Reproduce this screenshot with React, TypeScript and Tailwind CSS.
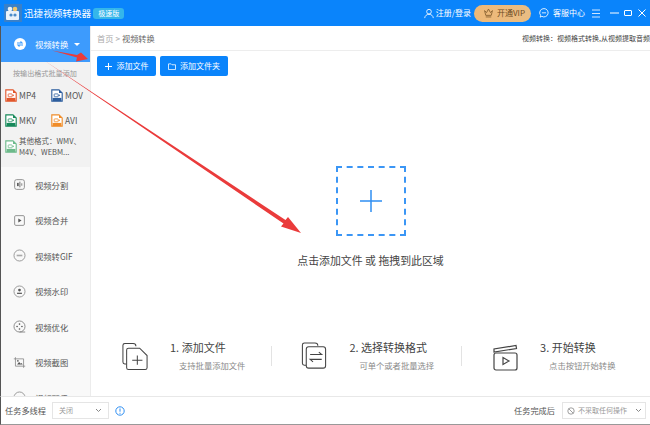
import React from "react";

const font = { fontFamily: '"Noto Sans CJK SC", "Liberation Sans", sans-serif' };

function Doc({ color, label }: { color: string; label: string }) {
  return (
    <svg width="12" height="13" viewBox="0 0 15 16" className="shrink-0">
      <title>{label}</title>
      <path d="M1 1h9l4 4v10H1z" fill="#fff" stroke={color} strokeWidth="1.4" />
      <path d="M10 1v4h4" fill={color} />
      <rect x="2" y="11" width="11" height="4" fill={color} />
      <rect x="4" y="6" width="5" height="3.6" rx=".6" fill="none" stroke={color} strokeWidth="1" />
      <path d="M9 7.8l2-1.2v2.4z" fill={color} />
    </svg>
  );
}

function Format({ color, label }: { color: string; label: string }) {
  return (
    <div className="flex w-[46px] shrink-0 items-center gap-[2px]">
      <Doc color={color} label={label} />
      <span className="text-[8.5px] text-[#555]">{label}</span>
    </div>
  );
}

const tools: [string, React.ReactNode][] = [
  ["视频分割", <g key="a"><rect x="2" y="2" width="12" height="12" rx="2.5" fill="none" stroke="#888" strokeWidth="1.1" /><rect x="5" y="6" width="2" height="4" fill="#555" /><rect x="8" y="4.5" width="1" height="7" fill="#555" /><rect x="10" y="6.5" width="1.5" height="3" fill="#999" /></g>],
  ["视频合并", <g key="b"><rect x="2" y="2" width="12" height="12" rx="1.5" fill="none" stroke="#888" strokeWidth="1.1" /><path d="M6.5 5.5l4 2.5-4 2.5z" fill="#555" /></g>],
  ["视频转GIF", <g key="c"><circle cx="8" cy="8" r="6.8" fill="none" stroke="#888" strokeWidth="1" /><rect x="4.5" y="7" width="7" height="2" fill="#aaa" /></g>],
  ["视频水印", <g key="d"><circle cx="8" cy="8" r="6.8" fill="none" stroke="#888" strokeWidth="1" /><circle cx="8" cy="6.2" r="1.7" fill="#555" /><path d="M5 11h6V9.5H5z" fill="#555" /></g>],
  ["视频优化", <g key="e"><circle cx="8" cy="8" r="6.8" fill="none" stroke="#777" strokeWidth="1" /><path d="M8 14.8h7" stroke="#777" /><circle cx="8" cy="5" r="1" fill="#555" /><circle cx="8" cy="11" r="1" fill="#555" /><circle cx="5" cy="8" r="1" fill="#555" /><circle cx="11" cy="8" r="1" fill="#555" /></g>],
  ["视频截图", <g key="f"><path d="M3 1.500v11h12M1 3.500h12v11" fill="none" stroke="#888" strokeWidth="1" /><path d="M5 10.500l2.500-3 2 2 1-1 1.500 2z" fill="#555" /><circle cx="6" cy="6" r="1" fill="#555" /></g>],
  ["视频配乐", <g key="g"><circle cx="8" cy="8" r="6.8" fill="none" stroke="#888" strokeWidth="1" /><circle cx="8" cy="8" r="2" fill="#777" /></g>],
];

function Step({ icon, title, sub, subIndent }: { icon: React.ReactNode; title: string; sub: string; subIndent: string }) {
  return (
    <div className="flex items-start gap-[22px]">
      {icon}
      <div className="flex flex-col items-start">
        <div className="whitespace-nowrap text-[11px] leading-[18px] text-[#444]">{title}</div>
        <div className={`mt-[2px] whitespace-nowrap text-[8.3px] leading-[14px] text-[#8a8a8a] ${subIndent}`}>{sub}</div>
      </div>
    </div>
  );
}

export default function App() {
  return (
    <div className="relative flex h-[425px] w-[650px] flex-col overflow-hidden bg-white" style={font}>
      <header className="flex h-[26px] shrink-0 items-center bg-[#0a84fb] text-white">
        <svg width="18" height="18" viewBox="0 0 18 18" className="ml-[4px]">
          <rect width="18" height="18" fill="#3a80c8" />
          <rect x="2" y="7" width="13" height="9" rx="1" fill="#e8f2fb" />
          <circle cx="6" cy="5" r="2.3" fill="#e8f2fb" />
          <circle cx="11" cy="5" r="2.3" fill="#f5c66a" />
          <circle cx="7" cy="11" r="1.6" fill="#4a8cc8" />
          <circle cx="11" cy="11" r="1.6" fill="#4a8cc8" />
        </svg>
        <span className="ml-[2px] text-[9.6px]">迅捷视频转换器</span>
        <span className="ml-[2px] flex h-[11px] w-[31px] items-center justify-center rounded-[3px] bg-[#35b6ea] text-[7px]">极速版</span>
        <div className="ml-auto flex items-center">
          <svg width="10" height="11" viewBox="0 0 12 12" fill="none" stroke="#fff" strokeWidth="1">
            <circle cx="6" cy="3.8" r="2.8" />
            <path d="M.8 11.500c.4-3 2.500-4.500 5.200-4.500s4.800 1.500 5.200 4.500" />
          </svg>
          <span className="ml-[2px] whitespace-nowrap text-[8px]">注册/登录</span>
          <div className="ml-[3px] flex h-[17px] w-[57px] items-center rounded-full bg-gradient-to-r from-[#eeb877] to-[#e9bd83] pl-[9px] text-[#6b4a22]">
            <svg width="11" height="10" viewBox="0 0 14 12" fill="none" stroke="#7a5526" strokeWidth="1">
              <path d="M2 3l2.500 2.500L7 1l2.500 4.500L12 3l-1.500 6h-7z" />
              <path d="M3.500 11h7" />
            </svg>
            <span className="ml-[3px] whitespace-nowrap text-[8px]">开通VIP</span>
          </div>
          <svg width="10" height="10" viewBox="0 0 12 12" fill="none" stroke="#fff" strokeWidth="1" className="ml-[8px]">
            <path d="M6 .7a5 5 0 1 1-2.600 9.300L1.500 11l.4-2.200A5 5 0 0 1 6 .7z" />
            <path d="M3.500 5.800h5" />
          </svg>
          <span className="ml-[4px] whitespace-nowrap text-[8px]">客服中心</span>
          <svg width="8" height="9" viewBox="0 0 8 9" stroke="#cfe5ff" strokeWidth="1" className="ml-[7px]">
            <path d="M0 1h8M0 4.500h8M0 8h8" />
          </svg>
          <svg width="9" height="10" viewBox="0 0 9 10" stroke="#fff" strokeWidth="1" fill="none" className="ml-[10px]">
            <path d="M0 5h9" />
          </svg>
          <svg width="8" height="10" viewBox="0 0 8 10" stroke="#fff" strokeWidth="1" fill="none" className="ml-[5px]">
            <rect x=".5" y="2.500" width="7" height="5" rx=".5" />
          </svg>
          <svg width="8" height="10" viewBox="0 0 8 10" stroke="#fff" strokeWidth="1" className="ml-[6px] mr-[4px]">
            <path d="M.5 1.500l7 7M7.500 1.500l-7 7" />
          </svg>
        </div>
      </header>

      <div className="flex min-h-0 flex-1">
        <aside className="flex w-[91px] shrink-0 flex-col overflow-hidden border-x border-l-[#555] border-r-[#ececec] bg-[#f9f9f9]">
          <div className="flex h-[36px] shrink-0 items-center bg-[#3d9bfd] pl-[13px] text-white">
            <span className="flex h-[12px] w-[12px] items-center justify-center rounded-full bg-white">
              <svg width="8" height="8" viewBox="0 0 8 8" fill="none" stroke="#3d9bfd" strokeWidth="1.100">
                <path d="M1 3h5L4.500 1.500M7 5H2l1.500 1.500" />
              </svg>
            </span>
            <span className="ml-[9px] whitespace-nowrap text-[8.3px]">视频转换</span>
            <span className="ml-[6px] h-0 w-0 border-x-[3px] border-t-[3px] border-x-transparent border-t-white" />
          </div>
          <div className="flex h-[105px] shrink-0 flex-col bg-[#f2f2f2]">
            <div className="mt-[5px] whitespace-nowrap pl-[12px] text-[7.1px] leading-[12px] text-[#999]">按输出格式批量添加</div>
            <div className="mt-[10px] flex pl-[4px]">
              <Format color="#e2572c" label="MP4" />
              <Format color="#2d5e9e" label="MOV" />
            </div>
            <div className="mt-[12px] flex pl-[4px]">
              <Format color="#16895a" label="MKV" />
              <Format color="#f08c28" label="AVI" />
            </div>
            <div className="mt-[8px] flex items-center gap-[2px] pl-[4px]">
              <Doc color="#6cba8a" label="其他格式" />
              <span className="whitespace-nowrap text-[7.5px] leading-[11px] text-[#555]">其他格式：WMV、<br />M4V、WEBM...</span>
            </div>
          </div>
          <div className="flex flex-col">
            {tools.map(([label, icon]) => (
              <div key={label} className="flex h-[35.5px] shrink-0 items-center pl-[12px]">
                <svg width="13" height="13" viewBox="0 0 16 16">{icon}</svg>
                <span className="ml-[9px] whitespace-nowrap text-[8.3px] text-[#555]">{label}</span>
              </div>
            ))}
          </div>
        </aside>

        <main className="flex min-w-0 flex-1 flex-col">
          <div className="flex h-[25px] shrink-0 items-center justify-between border-b border-b-[#ededed] pl-[6px]">
            <div className="flex items-center text-[8.2px]">
              <span className="text-[#aaa]">首页</span>
              <span className="mx-[2px] text-[#aaa]">&gt;</span>
              <span className="text-[#666]">视频转换</span>
            </div>
            <span className="whitespace-nowrap text-[7px] text-[#444]">视频转换：视频格式转换,从视频提取音频</span>
          </div>
          <div className="flex gap-[4px] pl-[6px] pt-[5px]">
            <button className="flex h-[20px] w-[59px] items-center justify-center rounded-[2px] bg-[#0a84fb] text-[8px] text-white">
              <svg width="7" height="7" viewBox="0 0 7 7" stroke="#fff" className="mr-[5px]"><path d="M3.500 0v7M0 3.500h7" /></svg>
              添加文件
            </button>
            <button className="flex h-[20px] w-[68px] items-center justify-center rounded-[2px] bg-[#0a84fb] text-[8px] text-white">
              <svg width="8" height="7" viewBox="0 0 9 8" fill="none" stroke="#fff" strokeWidth=".9" className="mr-[4px]"><path d="M.5 1h3l1 1h4v5.500h-8z" /></svg>
              添加文件夹
            </button>
          </div>

          <div className="flex flex-1 flex-col items-center">
            <div className="mt-[90px] flex h-[70px] w-[70px] items-center justify-center border-2 border-dashed border-[#3b96f5]">
              <svg width="22" height="22" viewBox="0 0 22 22" stroke="#2f8ff2" strokeWidth="1.500"><path d="M11 0v22M0 11h22" /></svg>
            </div>
            <div className="mt-[16px] whitespace-nowrap text-[10.9px] leading-[16px] text-[#444]">点击添加文件 或 拖拽到此区域</div>
          </div>

          <div className="flex h-[58px] shrink-0 items-start pl-[31px]">
            <Step
              title="1. 添加文件"
              sub="支持批量添加文件"
              subIndent="ml-[9px]"
              icon={
                <svg width="26" height="29" viewBox="0 0 28 30" fill="none" stroke="#444" strokeWidth="1.100" className="mt-[4px]">
                  <path d="M5 23H3a2 2 0 0 1-2-2V3a2 2 0 0 1 2-2h9a3 3 0 0 1 3 3" />
                  <path d="M5 8a2 2 0 0 1 2-2h12l8 8v13a2 2 0 0 1-2 2H7a2 2 0 0 1-2-2z" fill="#fff" />
                  <path d="M11 19h11M16.500 14v10" />
                </svg>
              }
            />
            <div className="ml-[26px] mt-[8px] h-[20px] w-px bg-[#e3e3e3]" />
            <div className="ml-[29px]">
              <Step
                title="2. 选择转换格式"
                sub="可单个或者批量选择"
                subIndent="ml-[10px]"
                icon={
                  <svg width="26" height="29" viewBox="0 0 26 30" fill="none" stroke="#444" strokeWidth="1.100" className="mt-[4px]">
                    <path d="M5 24H3a2 2 0 0 1-2-2V3a2 2 0 0 1 2-2h11a3 3 0 0 1 3 3" />
                    <rect x="5" y="5" width="20" height="22" rx="2.500" fill="#fff" />
                    <path d="M9 13h12l-3-2.500M21 18H9l3 2.500" />
                  </svg>
                }
              />
            </div>
            <div className="ml-[27px] mt-[8px] h-[20px] w-px bg-[#e3e3e3]" />
            <div className="ml-[31px]">
              <Step
                title="3. 开始转换"
                sub="点击按钮开始转换"
                subIndent="ml-[9px]"
                icon={
                  <svg width="25" height="28" viewBox="0 0 25 28" fill="none" stroke="#444" strokeWidth="1.200" className="mt-[6px]">
                    <path d="M1 8V5l22-3.500.5 3L1 8z" />
                    <rect x="1" y="9" width="23" height="17" rx="2" />
                    <path d="M10 13.500l6 3.500-6 3.500z" />
                  </svg>
                }
              />
            </div>
          </div>
        </main>
      </div>

      <footer className="flex h-[29px] shrink-0 items-center border-y border-l border-t-[#e8e8e8] border-b-[#999] border-l-[#555] bg-white">
        <span className="ml-[4px] whitespace-nowrap text-[8.2px] text-[#555]">任务多线程</span>
        <div className="ml-[6px] flex h-[17px] w-[57px] items-center justify-between border border-[#e5e5e5] px-[6px] text-[7px] text-[#999]">
          <span>关闭</span>
          <svg width="7" height="5" viewBox="0 0 7 5" fill="none" stroke="#888"><path d="M1 1l2.500 2.500L6 1" /></svg>
        </div>
        <svg width="10" height="10" viewBox="0 0 10 10" fill="none" className="ml-[6px]">
          <circle cx="5" cy="5" r="4.200" stroke="#2f8ff2" />
          <path d="M5 2.500v3.200M5 6.800v1" stroke="#2f8ff2" />
        </svg>
        <span className="ml-auto whitespace-nowrap text-[8.2px] text-[#555]">任务完成后</span>
        <div className="ml-[7px] mr-[4px] flex h-[17px] w-[84px] items-center border border-[#e5e5e5] pl-[4px] pr-[3px] text-[7px] text-[#999]">
          <svg width="8" height="8" viewBox="0 0 8 8" fill="none" stroke="#888" strokeWidth=".8" className="mr-[3px]">
            <circle cx="4" cy="4" r="3.200" /><path d="M1.800 1.800l4.400 4.400" />
          </svg>
          <span className="whitespace-nowrap">不采取任何操作</span>
          <svg width="7" height="5" viewBox="0 0 7 5" fill="none" stroke="#888" className="ml-auto"><path d="M1 1l2.500 2.500L6 1" /></svg>
        </div>
      </footer>

      <svg width="650" height="425" viewBox="0 0 650 425" className="pointer-events-none absolute left-0 top-0">
        <path d="M52 50.500L77 55L81 52.500L88 59L76 61.500L77 57.500Z" fill="#ea3b3b" />
        <path d="M45 61L285.500 220L288 217L301 233L281 226.500L283.500 223.500Z" fill="#ea3b3b" />
      </svg>
    </div>
  );
}
